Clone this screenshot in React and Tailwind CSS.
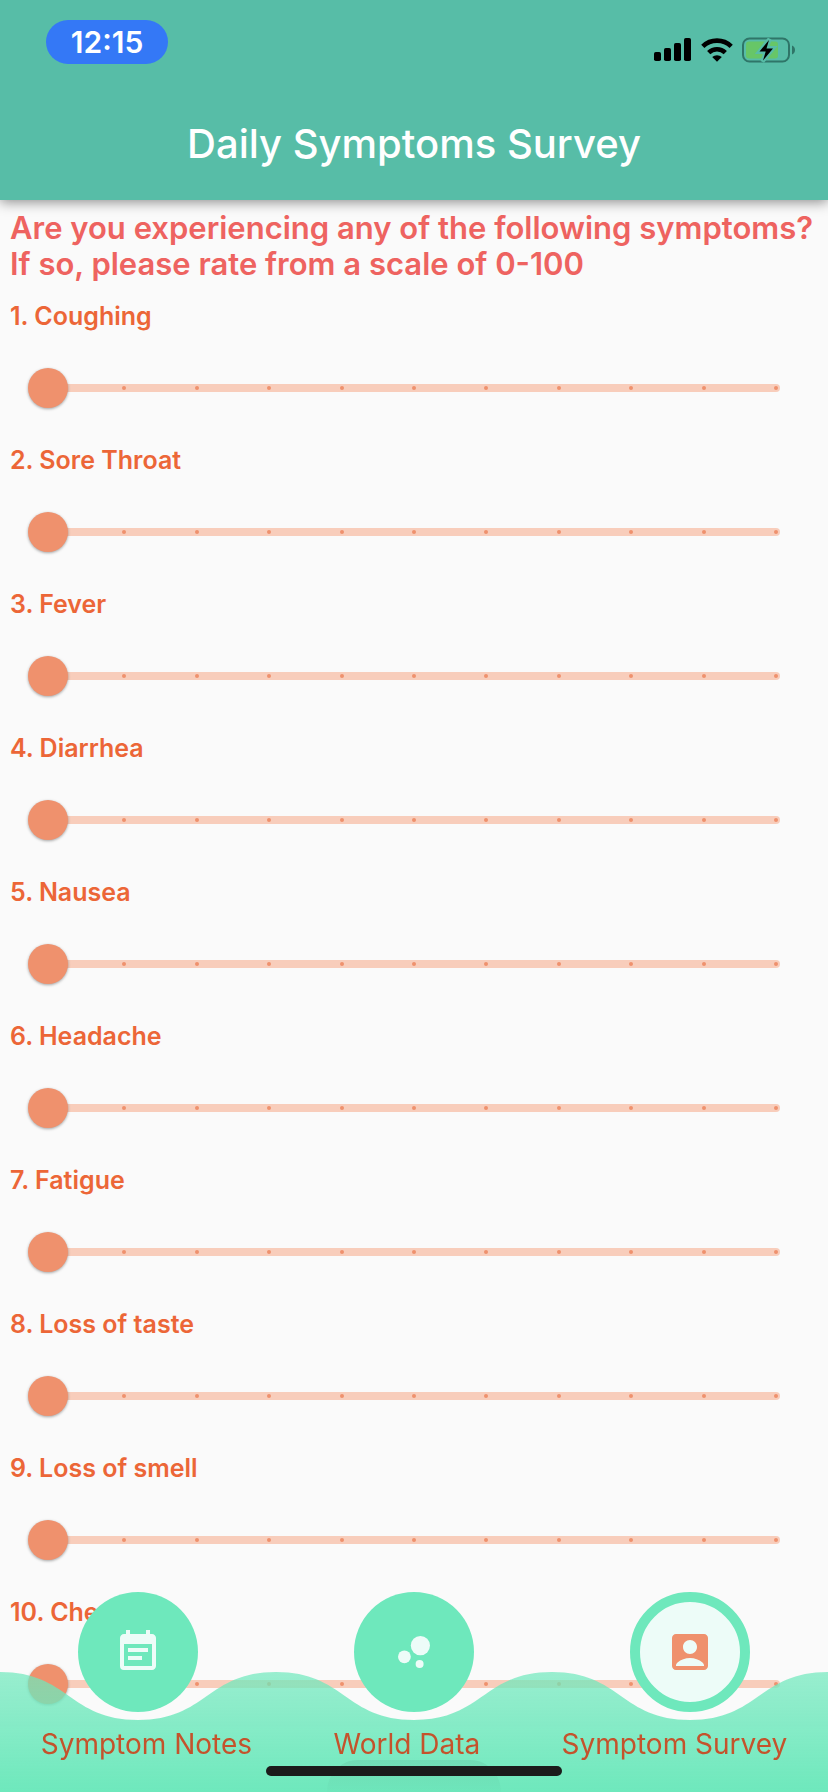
import { MdEventNote, MdBubbleChart, MdAccountBox } from "react-icons/md";

const symptoms = [
  "Coughing",
  "Sore Throat",
  "Fever",
  "Diarrhea",
  "Nausea",
  "Headache",
  "Fatigue",
  "Loss of taste",
  "Loss of smell",
  "Chest pain",
];

const tabs = [
  { id: "notes", label: "Symptom Notes", Icon: MdEventNote },
  { id: "world", label: "World Data", Icon: MdBubbleChart },
  { id: "survey", label: "Symptom Survey", Icon: MdAccountBox, active: true },
];

function SignalIcon() {
  return (
    <svg className="h-6 w-[38px]" viewBox="0 0 38 24" aria-hidden="true">
      <rect x="0" y="14" width="7" height="9" rx="1.8" />
      <rect x="10" y="10" width="7" height="13" rx="1.8" />
      <rect x="20" y="5" width="7" height="18" rx="1.8" />
      <rect x="30" y="0" width="7" height="23" rx="1.8" />
    </svg>
  );
}

function WifiIcon() {
  return (
    <svg className="h-6 w-8" viewBox="0 0 32 24" aria-hidden="true">
      <g fill="none" stroke="#000" strokeWidth="4.6">
        <path d="M1.8 8.4a20.4 20.4 0 0 1 28.4 0" />
        <path d="M7.7 14.6a12 12 0 0 1 16.6 0" />
      </g>
      <path d="M16 23.8l-4.8-4.7a7 7 0 0 1 9.6 0z" />
    </svg>
  );
}

function BatteryIcon() {
  return (
    <svg className="h-[26px] w-[54px]" viewBox="0 0 54 26" aria-hidden="true">
      <rect x="1" y="1.5" width="46" height="23" rx="6.5" fill="none" stroke="#2f7568" strokeWidth="2" />
      <path d="M50 8.5c4 1.5 4 7.5 0 9z" fill="#2f7568" />
      <rect x="4" y="4.5" width="32" height="17" rx="3" fill="#67c667" />
      <path
        d="M27.500 2 17 15h6.500L20.500 24.500 31.500 11h-6.500z"
        stroke="#57bda7"
        strokeWidth="4"
      />
      <path d="M27 3 17.500 14.500h6.200L21 23.500 31 11.500h-6.500z" />
    </svg>
  );
}

function SymptomRow({ number, name }) {
  const id = `symptom-${number}`;
  return (
    <li>
      <label htmlFor={id} className="block px-[10px] py-[10px] text-[25px] leading-7 font-semibold text-[#ec6637]">
        {number}. {name}
      </label>
      <div className="grid h-24 items-center">
        <div className="col-start-1 row-start-1 mx-12 flex h-2 items-center justify-between rounded-full bg-[#f8cdbb] px-[2px]">
          {Array.from({ length: 11 }, (_, i) => (
            <span key={i} className="size-1 rounded-full bg-[#ef916d]" />
          ))}
        </div>
        <input
          id={id}
          type="range"
          min="0"
          max="100"
          step="10"
          defaultValue="0"
          className="col-start-1 row-start-1 mx-7 h-10 cursor-pointer appearance-none bg-transparent [&::-webkit-slider-thumb]:size-10 [&::-webkit-slider-thumb]:appearance-none [&::-webkit-slider-thumb]:rounded-full [&::-webkit-slider-thumb]:bg-[#ef916d] [&::-webkit-slider-thumb]:shadow-[0_1px_3px_rgba(0,0,0,0.35)]"
        />
      </div>
    </li>
  );
}

function BottomNav() {
  return (
    <nav className="fixed inset-x-0 bottom-0 h-[200px]">
      <svg
        className="absolute inset-x-0 bottom-0 h-[120px] w-full"
        viewBox="0 0 828 120"
        preserveAspectRatio="none"
        aria-hidden="true"
      >
        <defs>
          <linearGradient id="wave" x1="0" y1="0" x2="0" y2="1">
            <stop offset="0" stopColor="#6ee8bc" stopOpacity="0.7" />
            <stop offset="1" stopColor="#6ee8bc" />
          </linearGradient>
          <linearGradient id="button" x1="0" y1="0" x2="0" y2="1">
            <stop offset="0" stopOpacity="0.06" />
            <stop offset="1" stopOpacity="0.01" />
          </linearGradient>
        </defs>
        <path
          fill="url(#wave)"
          d="M0 0C69 0 69 48 138 48S207 0 276 0S345 48 414 48S483 0 552 0S621 48 690 48S759 0 828 0V120H0z"
        />
        <path fill="url(#button)" d="M327 120C327 104 339 88 358 88H470C489 88 501 104 501 120z" />
      </svg>
      <div className="relative flex flex-col gap-4">
        <div className="grid grid-cols-3 justify-items-center">
          {tabs.map(({ id, Icon, active }) => (
            <a
              key={id}
              href={`#${id}`}
              aria-labelledby={`tab-${id}`}
              aria-current={active ? "page" : undefined}
              className={
                active
                  ? "flex size-[120px] items-center justify-center rounded-full border-[10px] border-[#6ee8bc] bg-[#edfcf8] text-[#ef916d]"
                  : "flex size-[120px] items-center justify-center rounded-full bg-[#6ee8bc] text-[#edfcf8]"
              }
            >
              <Icon className="size-12" />
            </a>
          ))}
        </div>
        <div className="flex justify-around text-[28px] leading-8 text-[#c4532c]">
          {tabs.map(({ id, label }) => (
            <span key={id} id={`tab-${id}`}>
              {label}
            </span>
          ))}
        </div>
      </div>
      <div className="absolute inset-x-0 bottom-4 mx-auto h-[10px] w-[296px] rounded-full bg-[#1b1b1b]" />
    </nav>
  );
}

export default function App() {
  return (
    <div className="h-screen overflow-hidden bg-[#fafafa] font-['Inter',sans-serif]">
      <header className="relative h-[200px] bg-[#57bda7] shadow-[0_2px_12px_rgba(0,0,0,0.45)]">
        <div className="flex h-[88px] items-start justify-between pt-5 pr-8 pl-[46px]">
          <time className="flex h-11 w-[122px] items-center justify-center rounded-full bg-[#3478f6] text-[30px] font-semibold text-white">
            12:15
          </time>
          <div className="flex items-center gap-[9px] pt-[17px]">
            <SignalIcon />
            <WifiIcon />
            <BatteryIcon />
          </div>
        </div>
        <h1 className="flex h-28 items-center justify-center text-[40px] font-medium text-white">
          Daily Symptoms Survey
        </h1>
      </header>
      <main>
        <h2 className="px-[10px] py-[10px] text-[31px] leading-9 font-semibold text-[#ee6360]">
          Are you experiencing any of the following symptoms?
          <br />
          If so, please rate from a scale of 0-100
        </h2>
        <ol>
          {symptoms.map((name, i) => (
            <SymptomRow key={name} number={i + 1} name={name} />
          ))}
        </ol>
      </main>
      <BottomNav />
    </div>
  );
}
